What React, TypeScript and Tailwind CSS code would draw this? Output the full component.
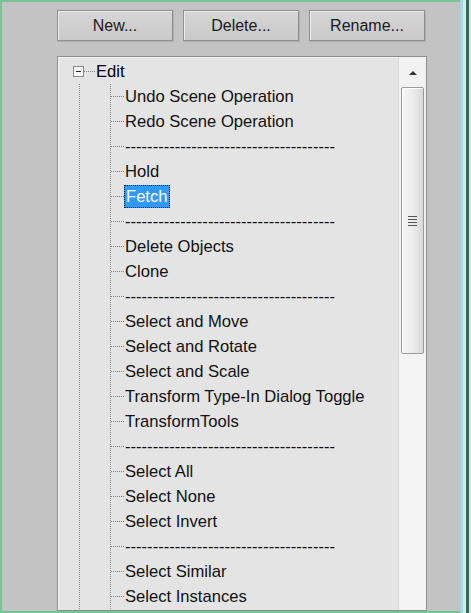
import React from "react";

type Row = { label: string; sep?: boolean; selected?: boolean };

const DASHES = "--------------------------------------";

const rows: Row[] = [
  { label: "Undo Scene Operation" },
  { label: "Redo Scene Operation" },
  { label: DASHES, sep: true },
  { label: "Hold" },
  { label: "Fetch", selected: true },
  { label: DASHES, sep: true },
  { label: "Delete Objects" },
  { label: "Clone" },
  { label: DASHES, sep: true },
  { label: "Select and Move" },
  { label: "Select and Rotate" },
  { label: "Select and Scale" },
  { label: "Transform Type-In Dialog Toggle" },
  { label: "TransformTools" },
  { label: DASHES, sep: true },
  { label: "Select All" },
  { label: "Select None" },
  { label: "Select Invert" },
  { label: DASHES, sep: true },
  { label: "Select Similar" },
  { label: "Select Instances" },
];

function Button({ label }: { label: string }) {
  return (
    <div className="flex h-[31px] w-[116px] items-center justify-center border border-[#8f8f8f] bg-gradient-to-b from-[#d6d6d6] to-[#c9c9c9] text-[16px] text-[#1a1a1a] shadow-[inset_1px_1px_0_#ececec,1px_1px_0_#b0b0b0]">
      {label}
    </div>
  );
}

function Scrollbar() {
  return (
    <div className="flex w-[28px] flex-col border-l border-[#d8d8d8] bg-[#f2f2f2]">
      <div className="flex h-[30px] items-center justify-center">
        <div className="mt-[2px] h-0 w-0 border-x-[4px] border-b-[4px] border-x-transparent border-b-[#333]" />
      </div>
      <div className="mx-[2px] flex h-[267px] items-center justify-center rounded-[2px] border border-[#9a9a9a] bg-gradient-to-r from-[#f6f6f6] via-[#ececec] to-[#d9d9d9] shadow-[inset_1px_1px_0_#ffffff]">
        <div className="flex flex-col gap-[2px]">
          <div className="h-[1px] w-[9px] bg-[#555]" />
          <div className="h-[1px] w-[9px] bg-[#555]" />
          <div className="h-[1px] w-[9px] bg-[#555]" />
          <div className="h-[1px] w-[9px] bg-[#555]" />
        </div>
      </div>
      <div className="flex-1 bg-[#f4f4f4]" />
    </div>
  );
}

export default function App() {
  return (
    <div
      className="flex h-[613px] w-[471px] overflow-hidden bg-[#c3c3c3] text-black"
      style={{ fontFamily: '"Liberation Sans", Arial, sans-serif' }}
    >
      <div className="flex min-w-0 flex-1 flex-col overflow-hidden border-b-2 border-l-2 border-t-2 border-[#78c396] pl-[55px] pt-[8px]">
        <div className="flex gap-[10px]">
          <Button label="New..." />
          <Button label="Delete..." />
          <Button label="Rename..." />
        </div>

        <div className="mt-[15px] flex w-[370px] flex-1 overflow-hidden border border-[#8e8e8e] bg-[#e4e4e4] shadow-[inset_1px_1px_0_#f4f4f4]">
          <div className="min-w-0 flex-1 pt-[2px] text-[16.6px] leading-[25px]">
            <div className="flex h-[25px] items-center">
              <div className="ml-[15px] flex h-[11px] w-[11px] items-center justify-center border border-[#8a8a8a] bg-[#f7f7f7]">
                <div className="h-[1px] w-[5px] bg-[#222]" />
              </div>
              <div className="w-[11px] border-t border-dotted border-[#808080]" />
              <span className="ml-[1px]">Edit</span>
            </div>
            <div className="ml-[21px] border-l border-dotted border-[#8a8a8a] pl-[30px]">
              <div className="border-l border-dotted border-[#8a8a8a]">
                {rows.map((r, i) => (
                  <div key={i} className="flex h-[25px] items-center">
                    <div className="w-[13px] border-t border-dotted border-[#808080]" />
                    {r.selected ? (
                      <span className="ml-[0px] border border-dotted border-[#1a1a1a] bg-[#3399ff] px-[1px] leading-[21px] text-white">
                        {r.label}
                      </span>
                    ) : (
                      <span className="ml-[1px] whitespace-nowrap text-[#111]">{r.label}</span>
                    )}
                  </div>
                ))}
              </div>
            </div>
          </div>
          <Scrollbar />
        </div>
      </div>

      <div className="flex h-full">
        <div className="w-[2px] border-t-2 border-b-2 border-[#78c396] bg-[#c3c3c3]" />
        <div className="w-[3px] bg-[#a8d6e2]" />
        <div className="w-[3px] bg-[#cfeaf0]" />
        <div className="w-[3px] bg-[#2e6b52]" />
        <div className="w-[2px] bg-[#d8e8e0]" />
      </div>
    </div>
  );
}
